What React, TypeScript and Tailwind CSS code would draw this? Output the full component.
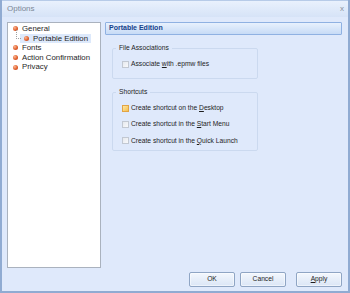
// Options dialog — Portable Edition page

import React from "react";

const font = { fontFamily: '"Liberation Sans", Arial, sans-serif' };

function Bullet() {
  return (
    <span className="inline-block w-[5px] h-[5px] rounded-full bg-[radial-gradient(circle_at_35%_35%,#fbb894_0%,#e0602e_55%,#b23a14_100%)] shrink-0" />
  );
}

function TreeItem({ label, indent, selected }: { label: string; indent?: boolean; selected?: boolean }) {
  return (
    <div className={`flex items-center h-[9.6px] ${indent ? "pl-[12px]" : "pl-[5px]"}`}>
      <div className={`flex items-center gap-[4px] h-full pr-[3px] ${selected ? "bg-[#dde9fb] pl-[4px]" : ""}`}>
        <Bullet />
        <span>{label}</span>
      </div>
    </div>
  );
}

function Check({ active, children }: { active?: boolean; children: React.ReactNode }) {
  return (
    <div className="flex items-center gap-[2px] h-[8px]">
      <span
        className={`inline-block w-[7px] h-[7px] border ${
          active
            ? "border-[#e2a445] bg-[linear-gradient(135deg,#fde7a4,#f6c04e)]"
            : "border-[#c2c8d2] bg-[linear-gradient(135deg,#e6e9ee,#f8f9fb)]"
        }`}
      />
      <span>{children}</span>
    </div>
  );
}

function Group({ title, children, className }: { title: string; children: React.ReactNode; className?: string }) {
  return (
    <fieldset className={`border border-[#cbd9ef] rounded-[2px] ml-[7px] w-[146px] px-[9px] ${className ?? ""}`}>
      <legend className="px-[3px] -ml-[6px] leading-[8px]">{title}</legend>
      {children}
    </fieldset>
  );
}

function Btn({ children }: { children: React.ReactNode }) {
  return (
    <div className="w-[46px] h-[15px] border border-[#8fa5c4] rounded-[2px] bg-[linear-gradient(#f3f7fd,#dbe6f6)] flex items-center justify-center shadow-[inset_0_0_0_1px_#ffffff80]">
      {children}
    </div>
  );
}

export default function App() {
  return (
    <div style={font} className="w-[350px] h-[293px] text-[6.7px] text-[#1e1e1e] bg-[#dfe9fb] border-x-2 border-b-2 border-[#90abd2] flex flex-col overflow-hidden">
      {/* Title bar */}
      <div className="h-[17px] flex items-center justify-between pl-[5px] pr-[4px] bg-[linear-gradient(#e9f1fd,#d6e3f7)] border-t border-[#b7cbe8] shrink-0">
        <span className="text-[8px] text-[#7c8797]">Options</span>
        <span className="text-[8px] text-[#8a929e] leading-none">x</span>
      </div>

      <div className="flex mt-[5px] pl-[5px] gap-[4px] h-[246px]">
        {/* Tree */}
        <div className="w-[94px] h-full bg-white border border-[#aab2be] pt-[1px] relative text-[7.8px]">
          <div className="absolute left-[8px] top-[7px] w-[5px] h-[9px] border-l border-b border-dotted border-[#a0a0a0]" />
          <TreeItem label="General" />
          <TreeItem label="Portable Edition" indent selected />
          <TreeItem label="Fonts" />
          <TreeItem label="Action Confirmation" />
          <TreeItem label="Privacy" />
        </div>

        {/* Page */}
        <div className="flex-1 pr-[6px]">
          <div className="h-[13px] border border-[#8fb1e2] rounded-[1px] bg-[linear-gradient(#e8f1fd,#c7dbf6)] flex items-center pl-[3px]">
            <span className="text-[7px] font-bold text-[#15428b]">Portable Edition</span>
          </div>

          <Group title="File Associations" className="mt-[9px] h-[35px] pt-[8px]">
            <Check>
              Associate <span className="underline">w</span>ith .epmw files
            </Check>
          </Group>

          <Group title="Shortcuts" className="mt-[9px] h-[63px] pt-[8px]">
            <div className="flex flex-col gap-[8.3px]">
              <Check active>
                Create shortcut on the <span className="underline">D</span>esktop
              </Check>
              <Check>
                Create shortcut in the <span className="underline">S</span>tart Menu
              </Check>
              <Check>
                Create shortcut in the <span className="underline">Q</span>uick Launch
              </Check>
            </div>
          </Group>
        </div>
      </div>

      {/* Buttons */}
      <div className="flex justify-end items-center mt-[4px] pr-[6px] gap-[5px]">
        <Btn>OK</Btn>
        <Btn>Cancel</Btn>
        <div className="ml-[5px]">
          <Btn>
            <span>
              <span className="underline">A</span>pply
            </span>
          </Btn>
        </div>
      </div>
    </div>
  );
}
